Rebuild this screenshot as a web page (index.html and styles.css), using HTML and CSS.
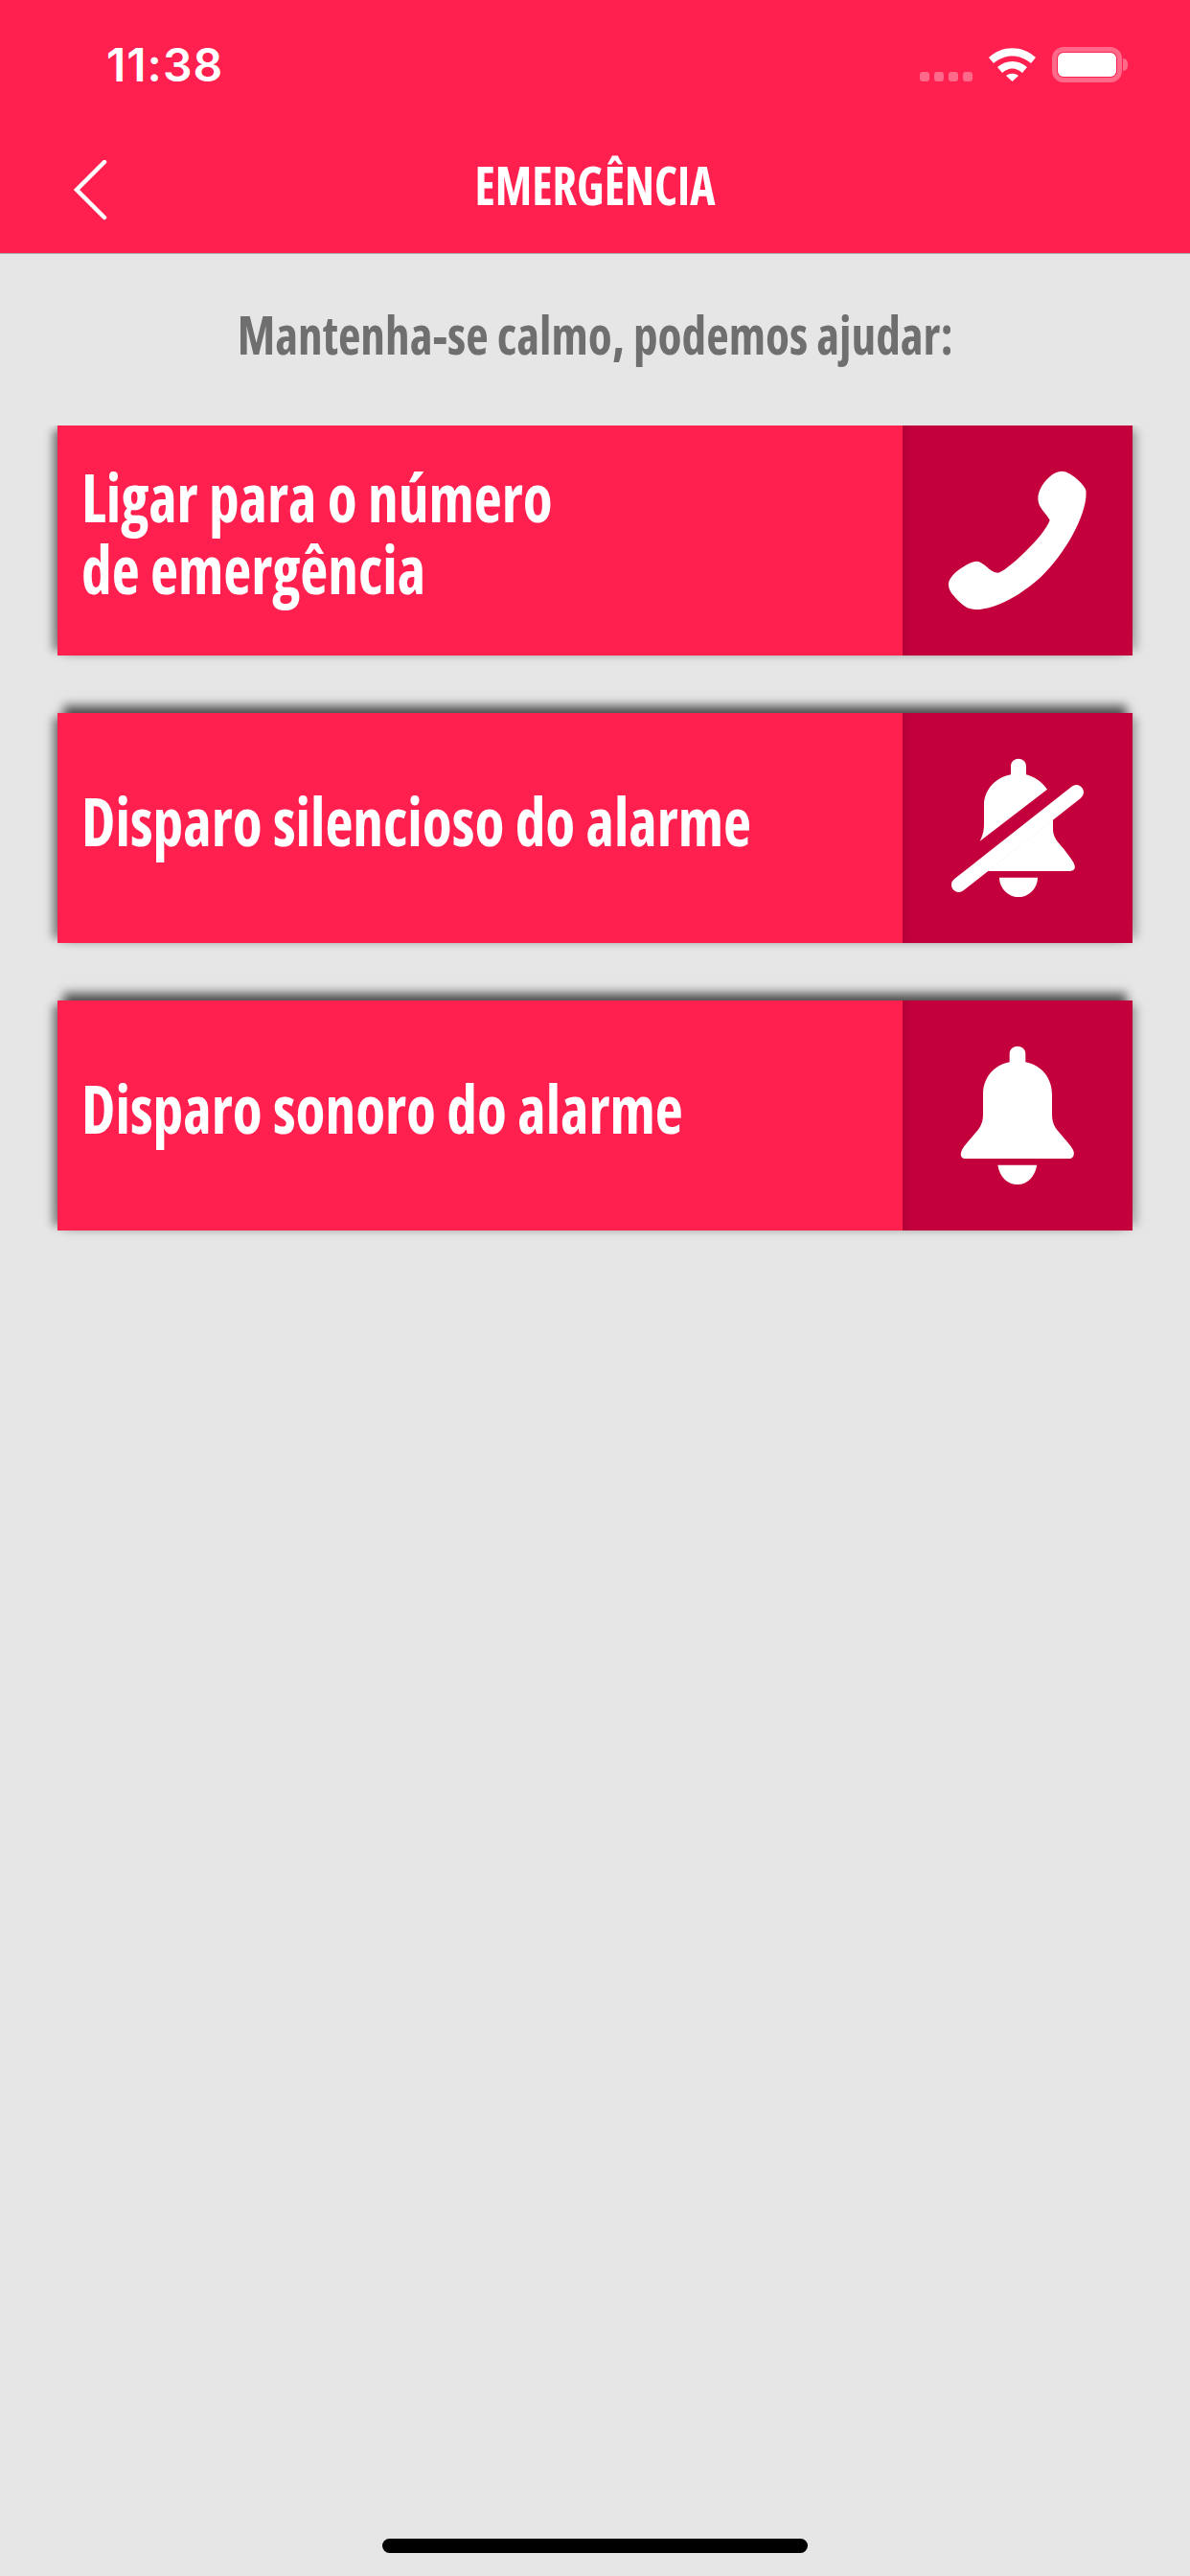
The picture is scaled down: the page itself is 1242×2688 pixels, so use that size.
FILE: index.html
```html
<!DOCTYPE html>
<html lang="pt">

<head>
    <meta charset="utf-8">
    <meta name="viewport" content="width=device-width, initial-scale=1.0">
    <title>Emergência</title>
    <link rel="stylesheet" href="styles.css">
</head>

<body>
    <header class="topo">
        <div class="status">
            <span class="hora">11:38</span>
            <div class="status-icones">
                <div class="sinal"><i></i><i></i><i></i><i></i></div>
                <svg class="wifi" viewBox="0 0 49 35">
                    <path d="M0 10 C14 -3 35 -3 49 10 L44 16 C32 6 17 6 5 16 Z" fill="#fff" />
                    <path d="M9 20 C18 12 31 12 40 20 L35 26 C28 20 21 20 14 26 Z" fill="#fff" />
                    <path d="M18 29 C22 26 27 26 31 29 L24.5 35 Z" fill="#fff" />
                </svg>
                <div class="bateria"><div class="carga"></div></div>
            </div>
        </div>
        <div class="navbar">
            <svg class="voltar" viewBox="0 0 37 63">
                <path d="M33 2 L4 31 L33 60" fill="none" stroke="#fff" stroke-width="4.5" stroke-linecap="round" />
            </svg>
            <h1><span>EMERGÊNCIA</span></h1>
        </div>
    </header>

    <main class="conteudo">
        <p class="aviso"><span>Mantenha-se calmo, podemos ajudar:</span></p>

        <div class="lista">
            <article class="cartao primeiro">
                <h2><span>Ligar para o número<br>de emergência</span></h2>
                <div class="icone">
                    <svg viewBox="126 72 720 720">
                        <path d="M625 215 C650 215 695 255 700 275 C708 340 640 470 560 545 C500 600 420 648 355 648 C335 648 320 640 305 625 C285 605 270 590 270 570 C270 535 340 497 358 497 C380 497 400 533 425 533 C445 533 570 420 587 368 C575 345 550 330 550 300 C550 265 590 215 625 215 Z" fill="#fff" />
                    </svg>
                </div>
            </article>

            <article class="cartao">
                <h2><span>Disparo silencioso do alarme</span></h2>
                <div class="icone">
                    <svg viewBox="126 72 720 720">
                        <path d="M465 265 V239 C465 207 513 207 513 239 V265 C535 270 560 285 579 311 L368 473 C375 460 381 445 381 420 V360 C381 320 410 275 465 265 Z" fill="#fff" />
                        <path d="M302 610 L670 320" stroke="#fff" stroke-width="46" stroke-linecap="round" />
                        <path d="M597 405 V440 C600 470 620 480 640 510 C660 535 668 550 665 558 C663 565 655 567 650 567 H392 Z" fill="#fff" />
                        <path d="M429 587 H549 C549 620 522 648 489 648 C456 648 429 620 429 587 Z" fill="#fff" />
                    </svg>
                </div>
            </article>

            <article class="cartao">
                <h2><span>Disparo sonoro do alarme</span></h2>
                <div class="icone">
                    <svg viewBox="126 72 720 720">
                        <path d="M461 265 V239 C461 207 511 207 511 239 V265 C565 275 594 320 594 365 V430 C594 465 612 480 627 497 C642 515 657 530 662 545 C665 560 655 567 650 567 H322 C312 567 305 560 310 545 C315 530 330 515 345 497 C360 480 378 465 378 430 V365 C378 320 407 275 461 265 Z" fill="#fff" />
                        <path d="M424 587 H547 C540 625 515 648 486 648 C455 648 430 625 424 587 Z" fill="#fff" />
                    </svg>
                </div>
            </article>
        </div>
    </main>

    <div class="home-barra"></div>
</body>

</html>
```

FILE: styles.css
```css
body {
    margin: 0;
    min-height: 100vh;
    display: flex;
    flex-direction: column;
    background-color: #e6e6e6;
    font-family: 'Open Sans', sans-serif;
}

.topo {
    height: 264px;
    background-color: #ff2050;
    border-bottom: 1px solid #a9a9a9;
}

.status {
    height: 132px;
    display: flex;
    justify-content: space-between;
    align-items: flex-start;
    padding: 0 71px 0 111px;
}

.hora {
    margin-top: 39px;
    font-family: 'Inter', sans-serif;
    font-size: 48px;
    line-height: 58px;
    font-weight: 600;
    letter-spacing: 1px;
    color: white;
}

.status-icones {
    display: flex;
    align-items: flex-start;
    margin-top: 49px;
}

.sinal {
    display: flex;
    gap: 5px;
    margin-top: 26px;
    margin-right: 17px;
}

.sinal i {
    width: 10px;
    height: 10px;
    border-radius: 3px;
    background-color: #ff6a8a;
}

.wifi {
    width: 49px;
    height: 35px;
    margin-top: 1px;
    margin-right: 17px;
}

.bateria {
    position: relative;
    box-sizing: border-box;
    width: 73px;
    height: 37px;
    padding: 1px;
    border: 5px solid #ff6a8a;
    border-radius: 12px;
}

.bateria::after {
    content: "";
    position: absolute;
    left: 69px;
    top: 7px;
    width: 5px;
    height: 13px;
    border-radius: 0 6px 6px 0;
    background-color: #ff6a8a;
}

.carga {
    height: 100%;
    background-color: white;
    border-radius: 6px;
}

.navbar {
    height: 132px;
    position: relative;
    text-align: center;
}

.voltar {
    position: absolute;
    left: 76px;
    top: 35px;
    width: 37px;
    height: 63px;
}

h1 {
    margin: 0;
    padding-top: 22px;
    font-size: 56px;
    line-height: 76px;
    font-weight: 700;
    color: white;
    font-stretch: 75%;
}

h1 span {
    display: inline-block;
    transform: scaleX(0.89);
}

.aviso span {
    display: inline-block;
    transform: scaleX(0.915);
}

.aviso {
    margin: 0;
    padding-top: 45px;
    height: 131px;
    box-sizing: border-box;
    text-align: center;
    font-size: 56px;
    line-height: 76px;
    font-weight: 700;
    color: #6f6f6f;
    font-stretch: 75%;
}

.lista {
    display: flex;
    flex-direction: column;
    gap: 60px;
    margin: 48px 60px 0;
}

.cartao {
    height: 240px;
    display: flex;
    justify-content: space-between;
    background-color: #ff2050;
    box-shadow: 0 -14px 10px -6px rgba(0, 0, 0, 0.62),
        -10px 0 9px -5px rgba(0, 0, 0, 0.45),
        10px 0 9px -5px rgba(0, 0, 0, 0.25),
        0 8px 8px -6px rgba(0, 0, 0, 0.1);
}

.primeiro {
    clip-path: inset(0 -20px -20px -20px);
}

h2 {
    margin: 0;
    padding-left: 25px;
    padding-bottom: 16px;
    align-self: center;
    font-size: 70px;
    line-height: 75px;
    font-weight: 700;
    color: white;
    font-stretch: 75%;
}

h2 span {
    display: inline-block;
    transform: scaleX(0.905);
    transform-origin: left;
}

.icone {
    width: 240px;
    height: 240px;
    background-color: #c4003c;
    box-shadow: inset 8px 0 8px -4px rgba(0, 0, 0, 0.1);
}

.icone svg {
    display: block;
    width: 240px;
    height: 240px;
}

.conteudo {
    flex: 1;
}

.home-barra {
    width: 444px;
    height: 15px;
    margin: 0 auto 24px;
    background-color: black;
    border-radius: 8px;
}
```
